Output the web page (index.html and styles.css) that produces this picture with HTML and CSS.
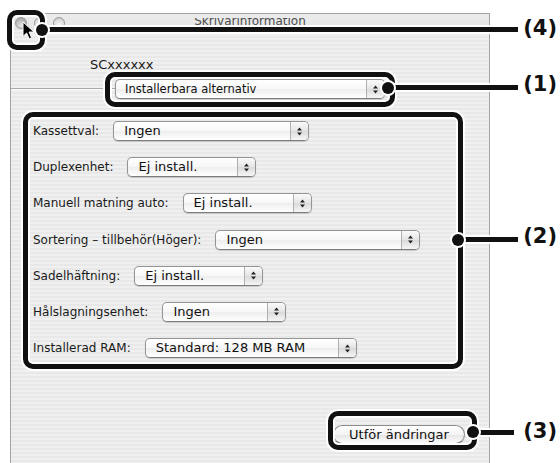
FILE: index.html
```html
<!DOCTYPE html>
<html lang="sv">
<head>
<meta charset="utf-8">
<title>Skrivarinformation</title>
<link rel="stylesheet" href="styles.css">
</head>
<body>
<div class="window">
  <div class="titlebar">
    <div class="lights">
      <span class="light close"></span>
      <span class="light"></span>
      <span class="light"></span>
    </div>
    <div class="title"><span>Skrivarinformation</span></div>
  </div>
  <div class="model">SCxxxxxx</div>
  <div class="group-head">
    <div class="popup small w-top"><span class="val">Installerbara alternativ</span><span class="arrows"><svg width="7" height="11" viewBox="0 0 7 11"><path d="M3.5 1.5 L6 4.5 L1 4.5 Z M1 6.5 L6 6.5 L3.5 9.5 Z" fill="#222"/></svg></span></div>
  </div>
  <div class="rows">
    <div class="row"><span class="label">Kassettval:</span><div class="popup w1"><span class="val">Ingen</span><span class="arrows"><svg width="7" height="11" viewBox="0 0 7 11"><path d="M3.5 1.5 L6 4.5 L1 4.5 Z M1 6.5 L6 6.5 L3.5 9.5 Z" fill="#222"/></svg></span></div></div>
    <div class="row"><span class="label">Duplexenhet:</span><div class="popup w2"><span class="val">Ej install.</span><span class="arrows"><svg width="7" height="11" viewBox="0 0 7 11"><path d="M3.5 1.5 L6 4.5 L1 4.5 Z M1 6.5 L6 6.5 L3.5 9.5 Z" fill="#222"/></svg></span></div></div>
    <div class="row"><span class="label">Manuell matning auto:</span><div class="popup w2"><span class="val">Ej install.</span><span class="arrows"><svg width="7" height="11" viewBox="0 0 7 11"><path d="M3.5 1.5 L6 4.5 L1 4.5 Z M1 6.5 L6 6.5 L3.5 9.5 Z" fill="#222"/></svg></span></div></div>
    <div class="row"><span class="label">Sortering – tillbehör(Höger):</span><div class="popup w4"><span class="val">Ingen</span><span class="arrows"><svg width="7" height="11" viewBox="0 0 7 11"><path d="M3.5 1.5 L6 4.5 L1 4.5 Z M1 6.5 L6 6.5 L3.5 9.5 Z" fill="#222"/></svg></span></div></div>
    <div class="row"><span class="label">Sadelhäftning:</span><div class="popup w2"><span class="val">Ej install.</span><span class="arrows"><svg width="7" height="11" viewBox="0 0 7 11"><path d="M3.5 1.5 L6 4.5 L1 4.5 Z M1 6.5 L6 6.5 L3.5 9.5 Z" fill="#222"/></svg></span></div></div>
    <div class="row"><span class="label">Hålslagningsenhet:</span><div class="popup w6"><span class="val">Ingen</span><span class="arrows"><svg width="7" height="11" viewBox="0 0 7 11"><path d="M3.5 1.5 L6 4.5 L1 4.5 Z M1 6.5 L6 6.5 L3.5 9.5 Z" fill="#222"/></svg></span></div></div>
    <div class="row"><span class="label">Installerad RAM:</span><div class="popup w7"><span class="val">Standard: 128 MB RAM</span><span class="arrows"><svg width="7" height="11" viewBox="0 0 7 11"><path d="M3.5 1.5 L6 4.5 L1 4.5 Z M1 6.5 L6 6.5 L3.5 9.5 Z" fill="#222"/></svg></span></div></div>
  </div>
  <div class="footer">
    <div class="button">Utför ändringar</div>
  </div>
</div>

<svg class="cursor" width="13" height="19" viewBox="0 0 13 19"><path d="M1 1 L1 15.5 L4.6 12 L7.2 17.8 L9.6 16.8 L7.1 11 L12 11 Z" fill="#000" stroke="#fff" stroke-width="1" stroke-linejoin="round"/></svg>

<div class="cbox b4"></div>
<div class="cbox b1"></div>
<div class="cbox b2"></div>
<div class="cbox b3"></div>

<div class="cline l4"></div>
<div class="cline l1"></div>
<div class="cline l2"></div>
<div class="cline l3"></div>

<div class="cdot d4"></div>
<div class="cdot d1"></div>
<div class="cdot d2"></div>
<div class="cdot d3"></div>

<div class="clabel t4">(4)</div>
<div class="clabel t1">(1)</div>
<div class="clabel t2">(2)</div>
<div class="clabel t3">(3)</div>
</body>
</html>
```

FILE: styles.css
```css
body {
  margin: 0;
  width: 560px;
  height: 463px;
  position: relative;
  overflow: hidden;
  background: #fff;
  font-family: "DejaVu Sans", "Liberation Sans", sans-serif;
  color: #111;
}

.window {
  box-sizing: border-box;
  margin: 13px 0 0 10px;
  width: 480px;
  height: 450px;
  border: 1px solid #a3a3a3;
  border-bottom: 0;
  background: repeating-linear-gradient(to bottom, #f0f0f0 0 2px, #e8e8e8 2px 4px);
}

.titlebar {
  display: grid;
  height: 16px;
  background: linear-gradient(#ececec, #e4e4e4);
}

.titlebar > * {
  grid-area: 1 / 1;
}

.lights {
  display: flex;
  gap: 7px;
  padding: 3px 0 0 4px;
  align-self: start;
}

.light {
  box-sizing: border-box;
  width: 12px;
  height: 12px;
  border-radius: 50%;
  border: 1px solid #9a9a9a;
  background: radial-gradient(circle at 50% 75%, #fafafa 0, #dcdcdc 60%, #c4c4c4 100%);
}

.light.close {
  background: radial-gradient(circle at 50% 75%, #e6e6e6 0, #b8b8b8 60%, #9c9c9c 100%);
}

.title {
  justify-self: center;
  align-self: start;
  margin-top: 4px;
  height: 9px;
  overflow: hidden;
  font-size: 12px;
  color: #4c4c4c;
}

.title span {
  display: block;
  line-height: 14px;
  margin-top: -4px;
}

.model {
  margin: 27px 0 0 79px;
  font-size: 13px;
  line-height: 15px;
  color: #1a1a1a;
}

.group-head {
  margin-top: 7px;
  height: 20px;
  display: flex;
  justify-content: center;
  background:
    linear-gradient(#a9a9a9, #a9a9a9) 0 9px / 100% 1px no-repeat,
    linear-gradient(#fbfbfb, #fbfbfb) 0 10px / 100% 1px no-repeat;
}

.rows {
  margin: 22px 0 0 22px;
  display: flex;
  flex-direction: column;
  gap: 16.2px;
}

.row {
  display: flex;
  align-items: center;
  gap: 14px;
  height: 20px;
  font-size: 12px;
  color: #1a1a1a;
}

.label {
  white-space: nowrap;
}

.popup {
  box-sizing: border-box;
  height: 20px;
  display: flex;
  align-items: center;
  border: 1px solid #949494;
  border-bottom-color: #7c7c7c;
  border-radius: 5px;
  background: linear-gradient(#ffffff, #f7f7f7 50%, #eeeeee 51%, #ffffff);
  box-shadow: 0 1px 1px rgba(0, 0, 0, 0.16);
  font-size: 13px;
  color: #111;
}

.popup .val {
  flex: 1;
  padding-left: 10px;
  white-space: nowrap;
  overflow: hidden;
  line-height: 18px;
}

.popup .arrows {
  width: 17px;
  align-self: stretch;
  display: flex;
  align-items: center;
  justify-content: center;
  border-left: 1px solid #b0b0b0;
  border-radius: 0 4px 4px 0;
  background: linear-gradient(#fafafa, #e4e4e4 50%, #dadada 51%, #f6f6f6);
}

.popup.small {
  font-size: 11.5px;
}

.popup.small .val {
  padding-left: 9px;
}

.w-top { width: 270px; }
.w1 { width: 196px; }
.w2 { width: 129px; }
.w4 { width: 205px; }
.w6 { width: 124px; }
.w7 { width: 212px; }

.footer {
  display: flex;
  justify-content: flex-end;
  margin-top: 67px;
  padding-right: 24px;
}

.button {
  box-sizing: border-box;
  width: 132px;
  height: 19px;
  border-radius: 10px;
  border: 1px solid #8c8c8c;
  border-bottom-color: #777;
  background: linear-gradient(#ffffff, #f4f4f4 50%, #e6e6e6 51%, #fcfcfc);
  box-shadow: 0 1px 1px rgba(0, 0, 0, 0.14);
  font-size: 13px;
  line-height: 17px;
  text-align: center;
  color: #111;
}

/* annotation overlays */
.cursor {
  position: absolute;
  left: 22px;
  top: 21px;
}

.cbox {
  position: absolute;
  box-sizing: border-box;
  border: 5px solid #111;
  border-radius: 10px;
  box-shadow: 0 0 0 2px #fff, inset 0 0 0 2px #fff;
}

.b4 { left: 7px; top: 10px; width: 38px; height: 40px; }
.b1 { left: 105px; top: 72px; width: 290px; height: 35px; }
.b2 { left: 23px; top: 112px; width: 440px; height: 257px; }
.b3 { left: 328px; top: 411px; width: 149px; height: 39px; }

.cline {
  position: absolute;
  height: 5px;
  background: #111;
  box-shadow: 0 0 0 2px #fff;
}

.l4 { left: 42px; top: 27px; width: 476px; }
.l1 { left: 388px; top: 85px; width: 130px; }
.l2 { left: 458px; top: 237px; width: 60px; }
.l3 { left: 473px; top: 430px; width: 41px; }

.cdot {
  position: absolute;
  width: 12px;
  height: 12px;
  border-radius: 50%;
  background: #111;
  box-shadow: 0 0 0 2px #fff;
}

.d4 { left: 36px; top: 24px; }
.d1 { left: 382px; top: 82px; }
.d2 { left: 452px; top: 234px; }
.d3 { left: 467px; top: 426px; }

.clabel {
  position: absolute;
  right: 3px;
  font-family: "DejaVu Sans", sans-serif;
  font-weight: bold;
  font-size: 21px;
  line-height: 21px;
  color: #111;
}

.t4 { top: 18px; }
.t1 { top: 74px; }
.t2 { top: 226px; }
.t3 { top: 421px; }
```
